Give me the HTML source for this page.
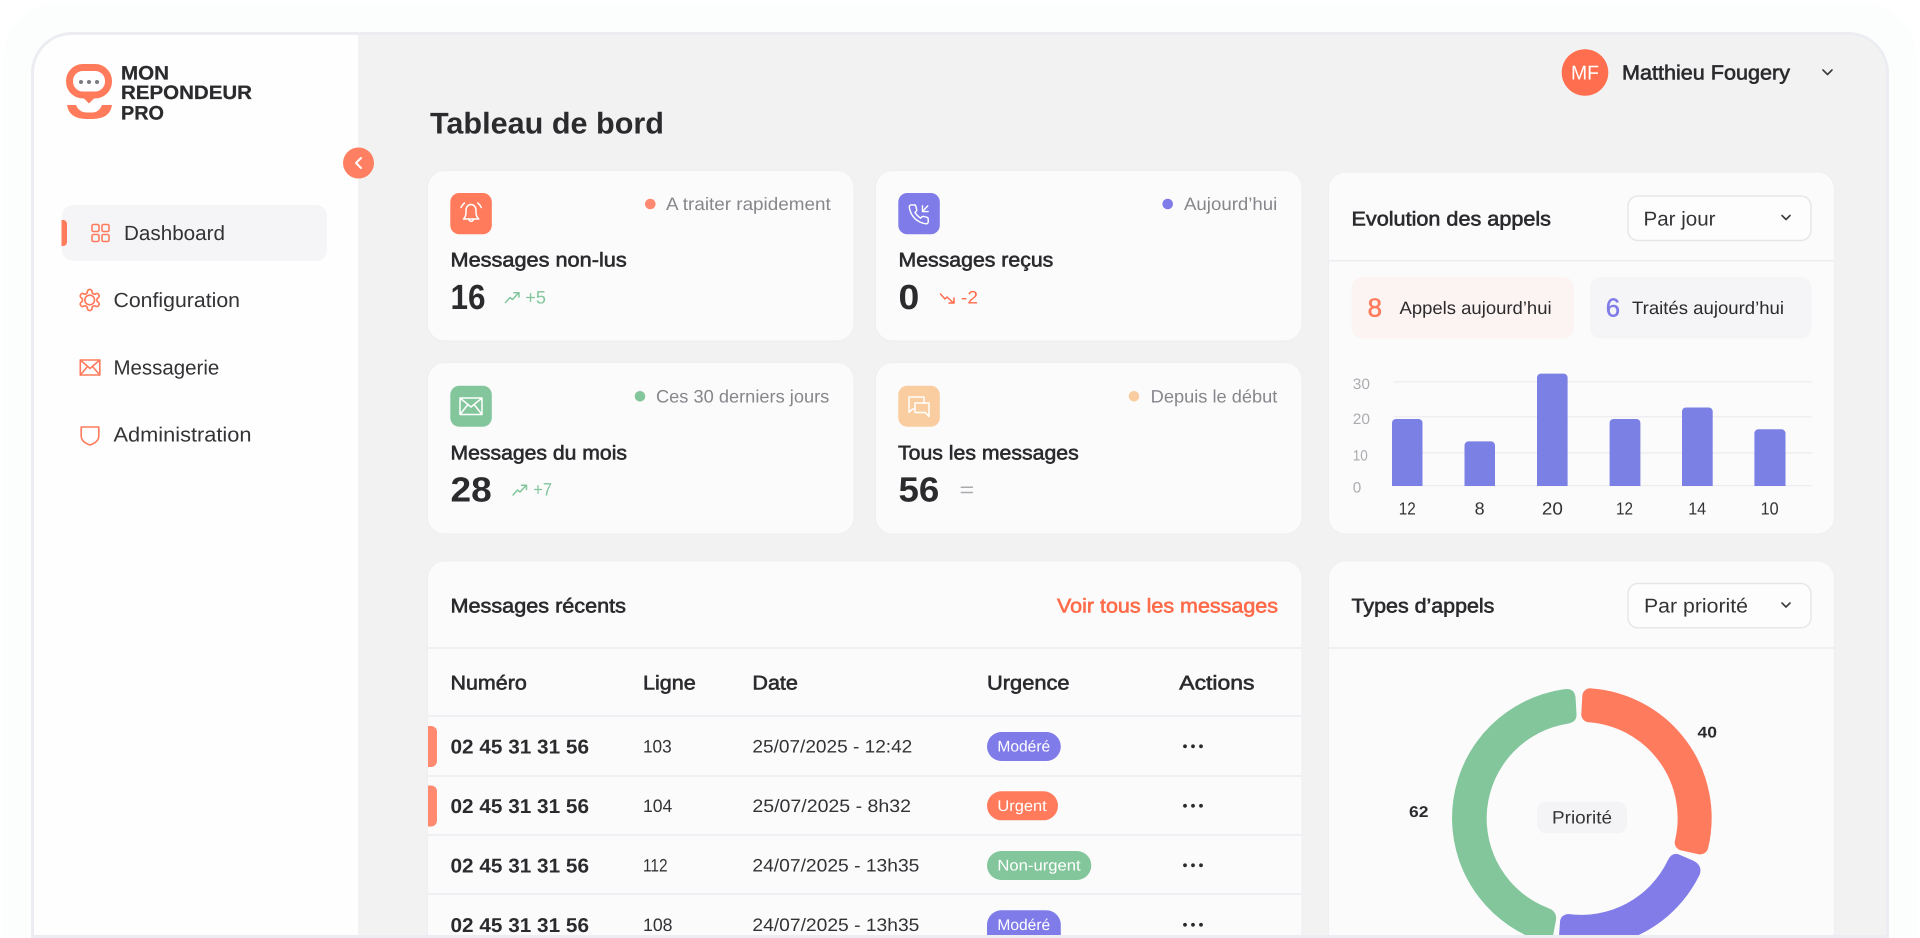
<!DOCTYPE html>
<html lang="fr"><head><meta charset="utf-8"><title>Tableau de bord</title>
<style>
html,body{margin:0;padding:0;background:#fff;width:1920px;height:938px;overflow:hidden}
svg{display:block}
text{font-family:"Liberation Sans",sans-serif;text-rendering:geometricPrecision;white-space:pre}
.n{fill:#333336}
.m{fill:#2b2b2e;stroke:#2b2b2e;stroke-width:.6}
.b{fill:#2b2b2e;font-weight:700}
.g{fill:#86868b}
.ax{fill:#acacb0;font-size:15px}
.v{fill:#333336;font-size:17.500px}
.card{fill:#fbfbfc;stroke:#efeff2;stroke-width:1}
.sel{fill:#fdfdfd;stroke:#e8e6e9;stroke-width:1.5}
.ic{fill:none;stroke:#ff7b5c;stroke-width:1.6;stroke-linejoin:round;stroke-linecap:round}
.w{fill:none;stroke:#fff;stroke-width:1.5;stroke-linejoin:round;stroke-linecap:round}
.ch{fill:none;stroke:#3b3b3f;stroke-width:1.6;stroke-linecap:round;stroke-linejoin:round}
.l{stroke:#ededf1;stroke-width:1.5}
.bt{fill:#fff;font-size:15.500px}
</style></head><body>
<svg xmlns="http://www.w3.org/2000/svg" width="1920" height="938" viewBox="0 0 1920 938">
<defs><clipPath id="fr2"><path d="M72 35H1848a38 38 0 0 1 38 38V935H34V73a38 38 0 0 1 38-38Z"/></clipPath></defs>
<path d="M3 938V59A56 56 0 0 1 59 3H1861A56 56 0 0 1 1917 59V938Z" fill="#fcfdfd"/>
<g clip-path="url(#fr2)">
<rect x="34" y="35" width="324" height="900" fill="#fefefe"/>
<rect x="358" y="35" width="1528" height="900" fill="#f2f2f3"/>

<!-- logo -->
<rect x="69.500" y="67.500" width="39" height="27.500" rx="13.500" fill="none" stroke="#ff7b5c" stroke-width="7"/>
<path d="M83 97.500H95L89 103.500Z" fill="#ff7b5c"/>
<circle cx="81" cy="82" r="2" fill="#7a7a80"/><circle cx="89" cy="82" r="2" fill="#7a7a80"/><circle cx="97" cy="82" r="2" fill="#7a7a80"/>
<path d="M67 105H76Q79 112.500 87 112.500H92Q99 112.500 102 105H112Q110 119 92 119H87Q69 119 67 105Z" fill="#ff7b5c"/>
<text x="121" y="79.500" class="b" font-size="19.500" stroke="#2b2b2e" stroke-width=".25" textLength="48" lengthAdjust="spacingAndGlyphs">MON</text>
<text x="121" y="98.800" class="b" font-size="19.500" stroke="#2b2b2e" stroke-width=".25" textLength="131" lengthAdjust="spacingAndGlyphs">REPONDEUR</text>
<text x="121" y="119.300" class="b" font-size="19.500" stroke="#2b2b2e" stroke-width=".25" textLength="43" lengthAdjust="spacingAndGlyphs">PRO</text>

<!-- nav -->
<rect x="62" y="205" width="265" height="56" rx="11" fill="#f5f5f7"/>
<path d="M61.500 220H63a4 4 0 0 1 4 4V242a4 4 0 0 1-4 4H61.500Z" fill="#ff7b5c"/>
<g class="ic"><rect x="92" y="224.500" width="7" height="7" rx="1.500"/><rect x="102" y="224.500" width="7" height="7" rx="1.500"/><rect x="92" y="234.500" width="7" height="7" rx="1.500"/><rect x="102" y="234.500" width="7" height="7" rx="1.500"/></g>
<text x="124" y="240" class="n" font-size="20.500" textLength="101" lengthAdjust="spacingAndGlyphs">Dashboard</text>
<g transform="translate(77.100 287.400) scale(1.05)" class="ic"><path d="M12.220 2h-.44a2 2 0 0 0-2 2v.18a2 2 0 0 1-1 1.730l-.43.250a2 2 0 0 1-2 0l-.15-.08a2 2 0 0 0-2.730.730l-.22.380a2 2 0 0 0 .730 2.730l.15.100a2 2 0 0 1 1 1.720v.510a2 2 0 0 1-1 1.740l-.15.090a2 2 0 0 0-.73 2.730l.22.380a2 2 0 0 0 2.730.730l.15-.08a2 2 0 0 1 2 0l.43.250a2 2 0 0 1 1 1.730V20a2 2 0 0 0 2 2h.44a2 2 0 0 0 2-2v-.18a2 2 0 0 1 1-1.730l.43-.25a2 2 0 0 1 2 0l.15.08a2 2 0 0 0 2.730-.73l.22-.39a2 2 0 0 0-.73-2.730l-.15-.08a2 2 0 0 1-1-1.740v-.5a2 2 0 0 1 1-1.740l.15-.09a2 2 0 0 0 .73-2.730l-.22-.38a2 2 0 0 0-2.730-.73l-.15.08a2 2 0 0 1-2 0l-.43-.25a2 2 0 0 1-1-1.730V4a2 2 0 0 0-2-2z"/><circle cx="12" cy="12" r="4.600"/></g>
<text x="113.500" y="307" class="n" font-size="20.500" textLength="126.500" lengthAdjust="spacingAndGlyphs">Configuration</text>
<g class="ic" stroke-linejoin="miter"><rect x="80.300" y="360" width="19.500" height="15"/><path d="M80.300 360L90 368.500L99.800 360M80.300 375L87.500 366.500M99.800 375L92.500 366.500"/></g>
<text x="113.500" y="374.300" class="n" font-size="20.500" textLength="105.800" lengthAdjust="spacingAndGlyphs">Messagerie</text>
<path class="ic" d="M81.200 427H98.800V436Q98.800 442 90 445Q81.200 442 81.200 436Z"/>
<text x="113.500" y="441.700" class="n" font-size="20.500" textLength="138" lengthAdjust="spacingAndGlyphs">Administration</text>

<!-- header -->
<text x="430" y="133.500" class="b" font-size="30" textLength="234" lengthAdjust="spacingAndGlyphs">Tableau de bord</text>
<circle cx="1585" cy="72.500" r="23.300" fill="#ff6f4f"/>
<text x="1571" y="79.300" fill="#fff" font-size="20" textLength="28" lengthAdjust="spacingAndGlyphs">MF</text>
<text x="1622" y="79.600" class="m" font-size="20.500" textLength="168" lengthAdjust="spacingAndGlyphs">Matthieu Fougery</text>
<path class="ch" d="M1823 70L1827.500 74.500L1832 70"/>

<!-- cards -->
<rect class="card" x="427.500" y="170.500" width="426.500" height="170.500" rx="17"/>
<rect x="450.300" y="193" width="41.500" height="41.300" rx="9" fill="#ff7b5c"/>
<g class="w"><path d="M463.500 219Q466 216.500 466 212.500V210a5 5.500 0 0 1 10 0V212.500Q476 216.500 478.800 219Z"/><path d="M468.500 219.300Q471 223.500 473.800 219.300"/><path d="M461 207.500Q462 205 464.500 203M481.300 207.500Q480.300 205 477.800 203"/></g>
<circle cx="650.300" cy="204" r="5.300" fill="#fd8a70"/>
<text x="666" y="210" class="g" font-size="18" textLength="164.700" lengthAdjust="spacingAndGlyphs">A traiter rapidement</text>
<text x="450.500" y="266.700" class="m" font-size="20" textLength="176.200" lengthAdjust="spacingAndGlyphs">Messages non-lus</text>
<text x="450.500" y="309" class="b" font-size="35" textLength="35" lengthAdjust="spacingAndGlyphs">16</text>
<g fill="none" stroke="#82c59b" stroke-width="1.500" stroke-linecap="round" stroke-linejoin="round"><path d="M505.500 302.500L510 297.500L512.500 299.500L518.500 293M514 292.700H519V297"/></g>
<text x="525.300" y="303.300" fill="#82c59b" font-size="18" textLength="20.700" lengthAdjust="spacingAndGlyphs">+5</text>

<rect class="card" x="875.500" y="170.500" width="426.500" height="170.500" rx="17"/>
<rect x="898.300" y="193" width="41.500" height="41.300" rx="9" fill="#7f7be8"/>
<g transform="translate(907.300 203) scale(.95)" class="w" stroke-width="1.600"><path d="M22 16.920v3a2 2 0 0 1-2.180 2 19.790 19.790 0 0 1-8.630-3.070 19.500 19.500 0 0 1-6-6 19.790 19.790 0 0 1-3.070-8.670A2 2 0 0 1 4.110 2h3a2 2 0 0 1 2 1.720 12.840 12.840 0 0 0 .7 2.810 2 2 0 0 1-.45 2.110L8.090 9.910a16 16 0 0 0 6 6l1.270-1.270a2 2 0 0 1 2.110-.45 12.840 12.840 0 0 0 2.810.7A2 2 0 0 1 22 16.920z"/><path d="M16 3v6h6M21.500 3l-5.500 6"/></g>
<circle cx="1167.700" cy="204" r="5.300" fill="#7f7be8"/>
<text x="1184" y="210" class="g" font-size="18" textLength="93.300" lengthAdjust="spacingAndGlyphs">Aujourd’hui</text>
<text x="898.500" y="266.700" class="m" font-size="20" textLength="154.800" lengthAdjust="spacingAndGlyphs">Messages reçus</text>
<text x="898.500" y="309" class="b" font-size="35" textLength="20.800" lengthAdjust="spacingAndGlyphs">0</text>
<path fill="none" stroke="#ff6b4a" stroke-width="1.500" stroke-linecap="round" stroke-linejoin="round" d="M940.500 294L945 299L947 297L953.500 303M954 298V303H949"/>
<text x="961" y="303.300" fill="#ff6b4a" font-size="18" textLength="17" lengthAdjust="spacingAndGlyphs">-2</text>

<rect class="card" x="427.500" y="362.500" width="426.500" height="171.500" rx="17"/>
<rect x="450.300" y="385.700" width="41.500" height="41" rx="9" fill="#83c69c"/>
<g class="w" stroke-width="1.900"><rect x="460" y="398" width="22" height="16.500" rx="1"/><path d="M460 398L471 407L482 398M460 414.500L467.500 405M482 414.500L474.500 405"/></g>
<circle cx="640" cy="396.300" r="5.300" fill="#83c69c"/>
<text x="656" y="402.700" class="g" font-size="18" textLength="173.300" lengthAdjust="spacingAndGlyphs">Ces 30 derniers jours</text>
<text x="450.500" y="459.300" class="m" font-size="20" textLength="176.500" lengthAdjust="spacingAndGlyphs">Messages du mois</text>
<text x="450.500" y="501.700" class="b" font-size="35" textLength="41.200" lengthAdjust="spacingAndGlyphs">28</text>
<path fill="none" stroke="#82c59b" stroke-width="1.500" stroke-linecap="round" stroke-linejoin="round" d="M513 495L517.500 490L520 492L526 485.500M521.500 485.200H526.500V489.500"/>
<text x="533.300" y="495.700" fill="#82c59b" font-size="18" textLength="18.700" lengthAdjust="spacingAndGlyphs">+7</text>

<rect class="card" x="875.500" y="362.500" width="426.500" height="171.500" rx="17"/>
<rect x="898.300" y="385.700" width="41.500" height="41" rx="9" fill="#f9cd9f"/>
<g class="w"><path d="M915 409H912.500L909 412.500V397H924V403"/><path d="M915 403H929V416.500L925.500 412.500H915Z"/></g>
<circle cx="1134" cy="396.300" r="5.300" fill="#f9cd9f"/>
<text x="1150.700" y="402.700" class="g" font-size="18" textLength="126.600" lengthAdjust="spacingAndGlyphs">Depuis le début</text>
<text x="898" y="459.300" class="m" font-size="20" textLength="180.700" lengthAdjust="spacingAndGlyphs">Tous les messages</text>
<text x="898.500" y="501.700" class="b" font-size="35" textLength="40.800" lengthAdjust="spacingAndGlyphs">56</text>
<path stroke="#aaaaae" stroke-width="1.500" d="M960.700 487.300H973M960.700 492.500H973"/>

<!-- evolution panel -->
<rect class="card" x="1328.500" y="172" width="506" height="362" rx="17"/>
<text x="1351.500" y="225.700" class="m" font-size="20" textLength="199.500" lengthAdjust="spacingAndGlyphs">Evolution des appels</text>
<rect class="sel" x="1628" y="196" width="183" height="44.500" rx="10"/>
<text x="1643.500" y="225.700" class="n" font-size="20" textLength="72" lengthAdjust="spacingAndGlyphs">Par jour</text>
<path class="ch" d="M1782 215.500L1786 219.500L1790 215.500"/>
<line class="l" x1="1329" y1="260.700" x2="1834" y2="260.700"/>
<rect x="1351.600" y="277" width="222.400" height="61.600" rx="11" fill="#fcf4f2"/>
<rect x="1590" y="277" width="221.600" height="61.600" rx="11" fill="#f5f5f7"/>
<text x="1367.600" y="316.400" fill="#ff7b5c" stroke="#ff7b5c" stroke-width=".5" font-size="26" textLength="14.400" lengthAdjust="spacingAndGlyphs">8</text>
<text x="1399.500" y="314" fill="#2b2b2e" font-size="18" textLength="152.100" lengthAdjust="spacingAndGlyphs">Appels aujourd’hui</text>
<text x="1605.700" y="316.400" fill="#7f7be8" stroke="#7f7be8" stroke-width=".5" font-size="26" textLength="14.300" lengthAdjust="spacingAndGlyphs">6</text>
<text x="1632" y="314" fill="#2b2b2e" font-size="18" textLength="152" lengthAdjust="spacingAndGlyphs">Traités aujourd’hui</text>
<g stroke="#ebebef" stroke-width="1.200"><line x1="1393.600" y1="381.800" x2="1811.600" y2="381.800"/><line x1="1393.600" y1="416.800" x2="1811.600" y2="416.800"/><line x1="1393.600" y1="452.900" x2="1811.600" y2="452.900"/><line x1="1393.600" y1="485.700" x2="1811.600" y2="485.700"/></g>
<text x="1352.800" y="389" class="ax" textLength="17.200" lengthAdjust="spacingAndGlyphs">30</text>
<text x="1352.800" y="424" class="ax" textLength="17.200" lengthAdjust="spacingAndGlyphs">20</text>
<text x="1352.800" y="460.400" class="ax" textLength="15" lengthAdjust="spacingAndGlyphs">10</text>
<text x="1352.800" y="492.500" class="ax" textLength="8.500" lengthAdjust="spacingAndGlyphs">0</text>
<g fill="#7b81e4">
<path d="M1392 486V423a4 4 0 0 1 4-4H1418.500a4 4 0 0 1 4 4V486Z"/>
<path d="M1464.500 486V445.400a4 4 0 0 1 4-4H1491a4 4 0 0 1 4 4V486Z"/>
<path d="M1537 486V377.600a4 4 0 0 1 4-4H1563.600a4 4 0 0 1 4 4V486Z"/>
<path d="M1609.600 486V423a4 4 0 0 1 4-4H1636.400a4 4 0 0 1 4 4V486Z"/>
<path d="M1682 486V411.500a4 4 0 0 1 4-4H1708.700a4 4 0 0 1 4 4V486Z"/>
<path d="M1754.400 486V433.300a4 4 0 0 1 4-4H1781.500a4 4 0 0 1 4 4V486Z"/>
</g>
<text x="1398.700" y="514.500" class="v" textLength="17" lengthAdjust="spacingAndGlyphs">12</text>
<text x="1474.600" y="514.500" class="v" textLength="10" lengthAdjust="spacingAndGlyphs">8</text>
<text x="1541.900" y="514.500" class="v" textLength="21" lengthAdjust="spacingAndGlyphs">20</text>
<text x="1616" y="514.500" class="v" textLength="17" lengthAdjust="spacingAndGlyphs">12</text>
<text x="1688.200" y="514.500" class="v" textLength="18" lengthAdjust="spacingAndGlyphs">14</text>
<text x="1760.600" y="514.500" class="v" textLength="18" lengthAdjust="spacingAndGlyphs">10</text>

<!-- table -->
<path class="card" d="M427.500 937V578a17 17 0 0 1 17-17H1285a17 17 0 0 1 17 17V937Z"/>
<text x="450.500" y="612.700" class="m" font-size="20" textLength="175.500" lengthAdjust="spacingAndGlyphs">Messages récents</text>
<text x="1057" y="612.700" fill="#ff6a48" stroke="#ff6a48" stroke-width=".6" font-size="20" textLength="221" lengthAdjust="spacingAndGlyphs">Voir tous les messages</text>
<line class="l" x1="428" y1="648" x2="1301.500" y2="648"/>
<text x="450.500" y="689.300" class="m" font-size="20" textLength="76.300" lengthAdjust="spacingAndGlyphs">Numéro</text>
<text x="643" y="689.300" class="m" font-size="20" textLength="52.800" lengthAdjust="spacingAndGlyphs">Ligne</text>
<text x="752.400" y="689.300" class="m" font-size="20" textLength="45.500" lengthAdjust="spacingAndGlyphs">Date</text>
<text x="987" y="689.300" class="m" font-size="20" textLength="82.600" lengthAdjust="spacingAndGlyphs">Urgence</text>
<text x="1179.300" y="689.300" class="m" font-size="20" textLength="75.200" lengthAdjust="spacingAndGlyphs">Actions</text>
<line class="l" x1="428" y1="716" x2="1301.500" y2="716"/>
<line class="l" x1="428" y1="776" x2="1301.500" y2="776"/>
<line class="l" x1="428" y1="835" x2="1301.500" y2="835"/>
<line class="l" x1="428" y1="894" x2="1301.500" y2="894"/>
<path d="M428 726H431a6 6 0 0 1 6 6V761a6 6 0 0 1-6 6H428Z" fill="#ff8a70"/>
<path d="M428 785.500H431a6 6 0 0 1 6 6V820.500a6 6 0 0 1-6 6H428Z" fill="#ff8a70"/>

<g font-size="20">
<text x="450.500" y="753.300" class="b" textLength="138.500" lengthAdjust="spacingAndGlyphs">02 45 31 31 56</text>
<text x="450.500" y="812.800" class="b" textLength="138.500" lengthAdjust="spacingAndGlyphs">02 45 31 31 56</text>
<text x="450.500" y="872.300" class="b" textLength="138.500" lengthAdjust="spacingAndGlyphs">02 45 31 31 56</text>
<text x="450.500" y="931.800" class="b" textLength="138.500" lengthAdjust="spacingAndGlyphs">02 45 31 31 56</text>
</g>
<g class="n" font-size="18">
<text x="643" y="752.300" textLength="28.700" lengthAdjust="spacingAndGlyphs">103</text>
<text x="643" y="811.800" textLength="29.300" lengthAdjust="spacingAndGlyphs">104</text>
<text x="643" y="871.300" textLength="24.600" lengthAdjust="spacingAndGlyphs">112</text>
<text x="643" y="930.800" textLength="29.500" lengthAdjust="spacingAndGlyphs">108</text>
<text x="752.400" y="752.300" textLength="159.900" lengthAdjust="spacingAndGlyphs">25/07/2025 - 12:42</text>
<text x="752.400" y="811.800" textLength="158.600" lengthAdjust="spacingAndGlyphs">25/07/2025 - 8h32</text>
<text x="752.400" y="871.300" textLength="167" lengthAdjust="spacingAndGlyphs">24/07/2025 - 13h35</text>
<text x="752.400" y="930.800" textLength="167" lengthAdjust="spacingAndGlyphs">24/07/2025 - 13h35</text>
</g>
<rect x="987" y="732" width="73.800" height="29" rx="14.500" fill="#7f7be8"/>
<text x="997.400" y="751.700" class="bt" textLength="52.800" lengthAdjust="spacingAndGlyphs">Modéré</text>
<rect x="987" y="791.300" width="71" height="29" rx="14.500" fill="#ff7b5c"/>
<text x="997.400" y="811" class="bt" textLength="49.300" lengthAdjust="spacingAndGlyphs">Urgent</text>
<rect x="987" y="851" width="104.300" height="29" rx="14.500" fill="#83c69c"/>
<text x="997.400" y="870.700" class="bt" textLength="83.300" lengthAdjust="spacingAndGlyphs">Non-urgent</text>
<path d="M987 936V924.800a14.500 14.500 0 0 1 14.500-14.500H1046.300a14.500 14.500 0 0 1 14.500 14.500V936Z" fill="#7f7be8"/>
<text x="997.400" y="930" class="bt" textLength="52.800" lengthAdjust="spacingAndGlyphs">Modéré</text>
<g fill="#2b2b2e">
<circle cx="1185" cy="746.300" r="1.900"/><circle cx="1193" cy="746.300" r="1.900"/><circle cx="1201" cy="746.300" r="1.900"/>
<circle cx="1185" cy="805.800" r="1.900"/><circle cx="1193" cy="805.800" r="1.900"/><circle cx="1201" cy="805.800" r="1.900"/>
<circle cx="1185" cy="865.300" r="1.900"/><circle cx="1193" cy="865.300" r="1.900"/><circle cx="1201" cy="865.300" r="1.900"/>
<circle cx="1185" cy="924.800" r="1.900"/><circle cx="1193" cy="924.800" r="1.900"/><circle cx="1201" cy="924.800" r="1.900"/>
</g>

<!-- types panel -->
<path class="card" d="M1328.500 937V578a17 17 0 0 1 17-17H1817.500a17 17 0 0 1 17 17V937Z"/>
<text x="1351.500" y="612.700" class="m" font-size="20" textLength="142.900" lengthAdjust="spacingAndGlyphs">Types d’appels</text>
<rect class="sel" x="1628" y="583.500" width="183" height="44.300" rx="10"/>
<text x="1644" y="612.700" class="n" font-size="20" textLength="104" lengthAdjust="spacingAndGlyphs">Par priorité</text>
<path class="ch" d="M1782 603L1786 607L1790 603"/>
<line class="l" x1="1329" y1="648" x2="1834" y2="648"/>
<path fill="#ff7b5e" stroke="#ff7b5e" stroke-width="16" stroke-linejoin="round" d="M1590.300 696.300A122 122 0 0 1 1700.300 846.400L1682.700 842.600A104 104 0 0 0 1589.300 714.300Z"/>
<path fill="#817ce8" d="M1559 936L1560 922Q1560.500 915 1568 914A96 96 0 0 0 1668 860Q1672 852 1679 854.500L1694 861Q1703 866 1699.500 875A130 130 0 0 1 1636.600 936Z"/>
<path fill="#83c69c" d="M1527.400 936A130 130 0 0 1 1563.900 689.300Q1574 687.500 1575.500 697L1576.500 714Q1577 722 1568 723.600A96 96 0 0 0 1548 908Q1557 911 1556 920L1553 936Z"/>
<text x="1697.500" y="737.700" class="b" font-size="15.500" textLength="19.500" lengthAdjust="spacingAndGlyphs">40</text>
<text x="1409" y="817" class="b" font-size="15.500" textLength="19.400" lengthAdjust="spacingAndGlyphs">62</text>
<rect x="1537" y="801.700" width="90" height="31.600" rx="9" fill="#f4f4f6"/>
<text x="1552" y="823.300" class="n" font-size="18" textLength="60" lengthAdjust="spacingAndGlyphs">Priorité</text>
</g>
<!-- frame border -->
<path d="M32.500 936V73A39.500 39.500 0 0 1 72 33.500H1848A39.500 39.500 0 0 1 1887.500 73V936" fill="none" stroke="#ecedf2" stroke-width="3"/>
<rect x="31" y="935" width="1858" height="3" fill="#ecedf2"/>
<!-- collapse button on top -->
<circle cx="358.500" cy="163" r="15.500" fill="#ff7f62"/>
<path d="M361 158L356 163L361 168" fill="none" stroke="#fff" stroke-width="2" stroke-linecap="round" stroke-linejoin="round"/>
</svg>
</body></html>
